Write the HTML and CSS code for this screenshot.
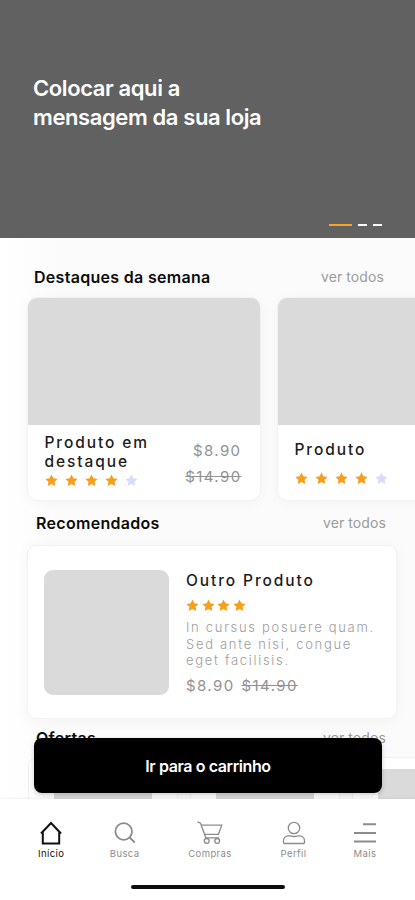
FILE: index.html
```html
<!DOCTYPE html>
<html lang="pt-BR">
<head>
    <meta charset="UTF-8">
    <meta name="viewport" content="width=device-width, initial-scale=1.0">
    <title>Loja</title>
    <link rel="stylesheet" href="styles.css">
</head>
<body>
    <svg width="0" height="0" class="sprite">
        <symbol id="star" viewBox="0 0 24 24">
            <path d="M12 1l3.500 7 7.800 1.100-5.700 5.400 1.400 7.800L12 18.600l-7 3.700 1.400-7.800L.7 9.100 8.500 8z"/>
        </symbol>
    </svg>

    <div class="app">
        <header class="hero">
            <h1 class="hero-title">Colocar aqui a<br>mensagem da sua loja</h1>
            <div class="slides">
                <span class="slide active"></span>
                <span class="slide"></span>
                <span class="slide"></span>
            </div>
        </header>

        <main class="content">
            <div class="section-head first">
                <h2 class="section-title">Destaques da semana</h2>
                <a class="see-all">ver todos</a>
            </div>
            <div class="featured">
                <article class="feature-card">
                    <div class="feature-image"></div>
                    <div class="feature-body">
                        <div class="feature-info">
                            <h3 class="product-name">Produto em<br>destaque</h3>
                            <div class="stars">
                                <svg class="star"><use href="#star"/></svg>
                                <svg class="star"><use href="#star"/></svg>
                                <svg class="star"><use href="#star"/></svg>
                                <svg class="star"><use href="#star"/></svg>
                                <svg class="star empty"><use href="#star"/></svg>
                            </div>
                        </div>
                        <div class="feature-prices">
                            <span class="price">$8.90</span>
                            <s class="price">$14.90</s>
                        </div>
                    </div>
                </article>
                <article class="feature-card">
                    <div class="feature-image"></div>
                    <div class="feature-body">
                        <div class="feature-info single">
                            <h3 class="product-name">Produto</h3>
                            <div class="stars">
                                <svg class="star"><use href="#star"/></svg>
                                <svg class="star"><use href="#star"/></svg>
                                <svg class="star"><use href="#star"/></svg>
                                <svg class="star"><use href="#star"/></svg>
                                <svg class="star empty"><use href="#star"/></svg>
                            </div>
                        </div>
                    </div>
                </article>
            </div>

            <div class="section-head second">
                <h2 class="section-title">Recomendados</h2>
                <a class="see-all">ver todos</a>
            </div>
            <article class="recommended">
                <div class="recommended-image"></div>
                <div class="recommended-body">
                    <h3 class="product-name">Outro Produto</h3>
                    <div class="stars tight">
                        <svg class="star"><use href="#star"/></svg>
                        <svg class="star"><use href="#star"/></svg>
                        <svg class="star"><use href="#star"/></svg>
                        <svg class="star"><use href="#star"/></svg>
                    </div>
                    <p class="description">In cursus posuere quam.<br>Sed ante nisi, congue<br>eget facilisis.</p>
                    <div class="recommended-prices">
                        <span class="price">$8.90</span>
                        <s class="price">$14.90</s>
                    </div>
                </div>
            </article>

            <div class="section-head third">
                <h2 class="section-title">Ofertas</h2>
                <a class="see-all">ver todos</a>
            </div>
            <div class="offers">
                <div class="offer-card"><div class="offer-image"></div></div>
                <div class="offer-card"><div class="offer-image"></div></div>
                <div class="offer-card"><div class="offer-image"></div></div>
            </div>
        </main>

        <button class="cart-button">Ir para o carrinho</button>

        <footer class="bottom">
            <nav class="tabs">
                <a class="tab active">
                    <svg class="tab-icon" viewBox="0 0 26 26">
                        <path class="thick" d="M3 13.500L13 3l10 10.500M4.800 12v11.500h16.400V12"/>
                    </svg>
                    <span class="tab-label">Início</span>
                </a>
                <a class="tab">
                    <svg class="tab-icon" viewBox="0 0 26 26">
                        <circle class="medium" cx="11.700" cy="11.500" r="8.300"/>
                        <path class="medium" d="M17.700 17.500l5 5"/>
                    </svg>
                    <span class="tab-label">Busca</span>
                </a>
                <a class="tab wide">
                    <svg class="tab-icon cart" viewBox="0 0 28 26">
                        <path d="M1.500 1.800l3 1.400 5.300 14.600h13.400M5.300 5.200h20.500L22.400 14.300H8.600"/>
                        <circle cx="10.700" cy="20.900" r="2.400"/>
                        <circle cx="21.200" cy="20.900" r="2.400"/>
                    </svg>
                    <span class="tab-label">Compras</span>
                </a>
                <a class="tab">
                    <svg class="tab-icon" viewBox="0 0 26 26">
                        <circle cx="13" cy="8" r="5.700"/>
                        <path d="M2.500 22.500v-2c0-3 2.700-4.700 5.700-4.700 1.800 0 2.300.7 4.800.7s3-.7 4.800-.7c3 0 5.700 1.700 5.700 4.700v2c0 .6-.5 1-1 1h-19c-.6 0-1-.4-1-1z"/>
                    </svg>
                    <span class="tab-label">Perfil</span>
                </a>
                <a class="tab">
                    <svg class="tab-icon" viewBox="0 0 26 26">
                        <path class="thick" d="M11 4.300h13M2 12.900h22M2 21.600h22"/>
                    </svg>
                    <span class="tab-label">Mais</span>
                </a>
            </nav>
            <div class="home-bar"></div>
        </footer>
    </div>
</body>
</html>
```

FILE: styles.css
```css
* {
    box-sizing: border-box;
}

body {
    margin: 0;
    font-family: Inter, "Liberation Sans", sans-serif;
    background: #ffffff;
}

h1, h2, h3, p {
    margin: 0;
}

.sprite {
    position: absolute;
}

.app {
    position: relative;
    display: flex;
    flex-direction: column;
    width: 415px;
    height: 900px;
    overflow: hidden;
}

/* Hero */
.hero {
    display: flex;
    flex-direction: column;
    justify-content: space-between;
    flex: none;
    height: 238px;
    padding: 74px 33px 12px 33px;
    background: #616161;
}

.hero-title {
    font-size: 22px;
    font-weight: 600;
    line-height: 29px;
    letter-spacing: -0.4px;
    color: #ffffff;
}

.slides {
    display: flex;
    justify-content: flex-end;
    gap: 6px;
}

.slide {
    width: 9px;
    height: 2px;
    background: #ffffff;
}

.slide.active {
    width: 23px;
    background: #f5a623;
}

/* Sections */
.content {
    flex: 1;
    min-height: 0;
    overflow: hidden;
    background: linear-gradient(to right, #ffffff, #fbfbfb 60px);
}

.section-head {
    display: flex;
    justify-content: space-between;
    align-items: center;
    height: 22px;
    padding: 0 29px 0 36px;
}

.section-head.first {
    margin: 28px 0 10px;
    padding: 0 31px 0 34px;
}

.section-head.second {
    margin: 12px 0 11px;
}

.section-head.third {
    margin: 8px 0;
}

.section-title {
    font-size: 16px;
    font-weight: 600;
    letter-spacing: 0.3px;
    color: #0c0c0c;
}

.see-all {
    margin-top: -1px;
    font-size: 14px;
    letter-spacing: 0.1px;
    color: #9b9b9b;
}

/* Featured products */
.featured {
    display: flex;
    gap: 18px;
    padding-left: 27.5px;
}

.feature-card {
    flex: none;
    width: 232px;
    height: 202px;
    border-radius: 9px;
    background: #ffffff;
    box-shadow: 0 0 0 1px #f2f2f5, 0 2px 14px rgba(60, 60, 90, 0.04);
    overflow: hidden;
}

.feature-image {
    height: 127px;
    background: #dadada;
}

.feature-body {
    display: flex;
    justify-content: space-between;
    padding: 8px 18px 0 17px;
}

.product-name {
    font-size: 15.5px;
    font-weight: 500;
    line-height: 19px;
    letter-spacing: 1.9px;
    color: #1c1c1c;
}

.stars {
    display: flex;
    gap: 7px;
    margin-top: 3px;
}

.stars.tight {
    gap: 2.7px;
}

.star {
    width: 13px;
    height: 13px;
    fill: #f79e1b;
}

.star.empty {
    fill: #d8dcfb;
}

.feature-info.single {
    padding-top: 7px;
}

.feature-info.single .stars {
    margin-top: 13px;
}

.feature-prices {
    display: flex;
    flex-direction: column;
    align-items: flex-end;
    gap: 6px;
    padding-top: 8px;
}

.price {
    font-size: 15px;
    line-height: 20px;
    letter-spacing: 1.4px;
    color: #929292;
}

/* Recommended product */
.recommended {
    display: flex;
    gap: 17px;
    width: 370px;
    height: 174px;
    margin-left: 27px;
    padding: 24px 16px;
    border: 1px solid #f2f2f5;
    border-radius: 9px;
    background: #ffffff;
    box-shadow: 0 2px 14px rgba(60, 60, 90, 0.04);
}

.recommended-image {
    flex: none;
    width: 125px;
    height: 125px;
    border-radius: 9px;
    background: #dadada;
}

.recommended-body {
    padding-top: 1px;
    white-space: nowrap;
}

.recommended-body .stars {
    margin-top: 9px;
}

.description {
    margin-top: 7px;
    font-size: 13px;
    font-weight: 300;
    line-height: 16.5px;
    letter-spacing: 1.7px;
    color: #9d9d9d;
}

.recommended-prices {
    display: flex;
    gap: 7px;
    margin-top: 7px;
}

/* Offers */
.offers {
    display: flex;
    gap: 12px;
    padding-left: 27.5px;
}

.offer-card {
    flex: none;
    width: 150px;
    height: 150px;
    padding: 11px 25px;
    border: 1px solid #f0f0f2;
    border-radius: 9px;
    background: #ffffff;
}

.offer-image {
    height: 100px;
    background: #dadada;
}

.cart-button {
    position: absolute;
    left: 34px;
    bottom: 107px;
    width: 348px;
    height: 55px;
    border: none;
    border-radius: 8px;
    background: #000000;
    box-shadow: 0 2px 5px rgba(0, 0, 0, 0.2);
    font-family: inherit;
    font-size: 16px;
    font-weight: 600;
    letter-spacing: -0.4px;
    color: #ffffff;
}

/* Bottom navigation */
.bottom {
    flex: none;
    height: 101px;
    padding-top: 21px;
    background: #ffffff;
    box-shadow: 0 -1px 2px rgba(0, 0, 0, 0.06);
}

.tabs {
    display: flex;
    justify-content: space-between;
    padding: 0 37px 0 38px;
}

.tab {
    display: flex;
    flex-direction: column;
    align-items: center;
    color: #8c8c8c;
}

.tab.wide {
    width: 50px;
}

.tab.active {
    color: #111111;
}

.tab-icon {
    width: 26px;
    height: 26px;
    fill: none;
    stroke: currentColor;
    stroke-width: 1.3;
}

.tab-icon.cart {
    width: 28px;
}

.tab-icon .medium {
    stroke-width: 1.8;
}

.tab-icon .thick {
    stroke-width: 2;
}

.tab-label {
    margin-top: 2px;
    font-size: 9.5px;
    line-height: 12px;
    letter-spacing: 0.4px;
}

.home-bar {
    width: 154px;
    height: 4px;
    margin: 25px auto 0;
    border-radius: 2px;
    background: #0d0d0d;
}
```
